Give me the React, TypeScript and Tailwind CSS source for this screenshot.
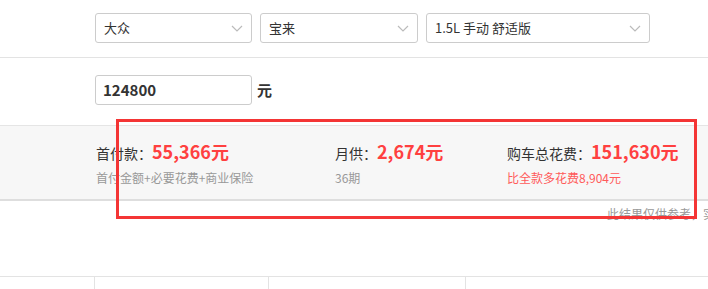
const font = { fontFamily: '"Noto Sans CJK SC", "Liberation Sans", sans-serif' };

const Chevron = () => (
  <svg width="12" height="7" viewBox="0 0 12 7" fill="none" className="shrink-0">
    <polyline points="1,1 6,6 11,1" stroke="#bbbbbb" strokeWidth="1.2" />
  </svg>
);

const Select = ({ value, width }: { value: string; width: string }) => {
  return (
    <div
      className={`h-[30px] ${width} border border-[#cccccc] rounded-[3px] bg-white flex items-center justify-between pl-[8px] pr-[8px]`}
    >
      <span className="text-[13px] leading-[16px] text-[#333333]">{value}</span>
      <Chevron />
    </div>
  );
};

const Summary = ({
  label,
  value,
  note,
  noteRed,
  width,
}: {
  label: string;
  value: string;
  note: string;
  noteRed?: boolean;
  width: string;
}) => {
  return (
    <div className={`${width} shrink-0`}>
      <div className="flex items-baseline h-[24px]">
        <span className="text-[14px] text-[#333333] leading-[24px]">{label}：</span>
        <span className="text-[18px] font-bold text-[#ff4040] leading-[24px]">{value}</span>
      </div>
      <p
        className={`mt-[7px] text-[12px] leading-[16px] ${
          noteRed ? "text-[#ff5a5a]" : "text-[#999999]"
        }`}
      >
        {note}
      </p>
    </div>
  );
};

const App = () => {
  return (
    <div className="w-[708px] h-[289px] bg-white relative overflow-hidden" style={font}>
      <section className="h-[58px] pl-[95px] pt-[13px] border-b border-[#e3e3e3] flex gap-[8px]">
        <Select value="大众" width="w-[157px]" />
        <Select value="宝来" width="w-[158px]" />
        <Select value="1.5L 手动 舒适版" width="w-[224px]" />
      </section>
      <section className="h-[67px] pl-[95px] pt-[17px] flex items-start">
        <div className="h-[30px] w-[157px] border border-[#cccccc] rounded-[3px] flex items-center px-[7px]">
          <span className="text-[15px] font-bold text-[#333333] leading-[18px]">124800</span>
        </div>
        <span className="ml-[5px] text-[15px] font-bold text-[#333333] leading-[30px]">元</span>
      </section>
      <section className="h-[76px] bg-[#f7f7f7] border-t border-[#e5e5e5] border-b-2 border-b-[#dedede] pl-[96px] pt-[13px] flex">
        <Summary
          label="首付款"
          value="55,366元"
          note="首付金额+必要花费+商业保险"
          width="w-[239px]"
        />
        <Summary label="月供" value="2,674元" note="36期" width="w-[172px]" />
        <Summary
          label="购车总花费"
          value="151,630元"
          note="比全款多花费8,904元"
          noteRed
          width="w-[200px]"
        />
      </section>
      <p className="pl-[607px] pt-[5px] text-[12px] leading-[16px] text-[#999999] whitespace-nowrap">
        此结果仅供参考，实际应付金额以店内实际成交价为准
      </p>
      <section className="mt-[54px] border-t border-[#e3e3e3] h-[20px] flex">
        <div className="w-[95px] border-r border-[#e3e3e3]" />
        <div className="w-[174px] border-r border-[#e3e3e3]" />
        <div className="w-[197px] border-r border-[#e3e3e3]" />
      </section>
      <div className="absolute left-[116px] top-[119px] w-[581px] h-[100px] border-[3px] border-[#f43535]" />
    </div>
  );
};

export default App;
